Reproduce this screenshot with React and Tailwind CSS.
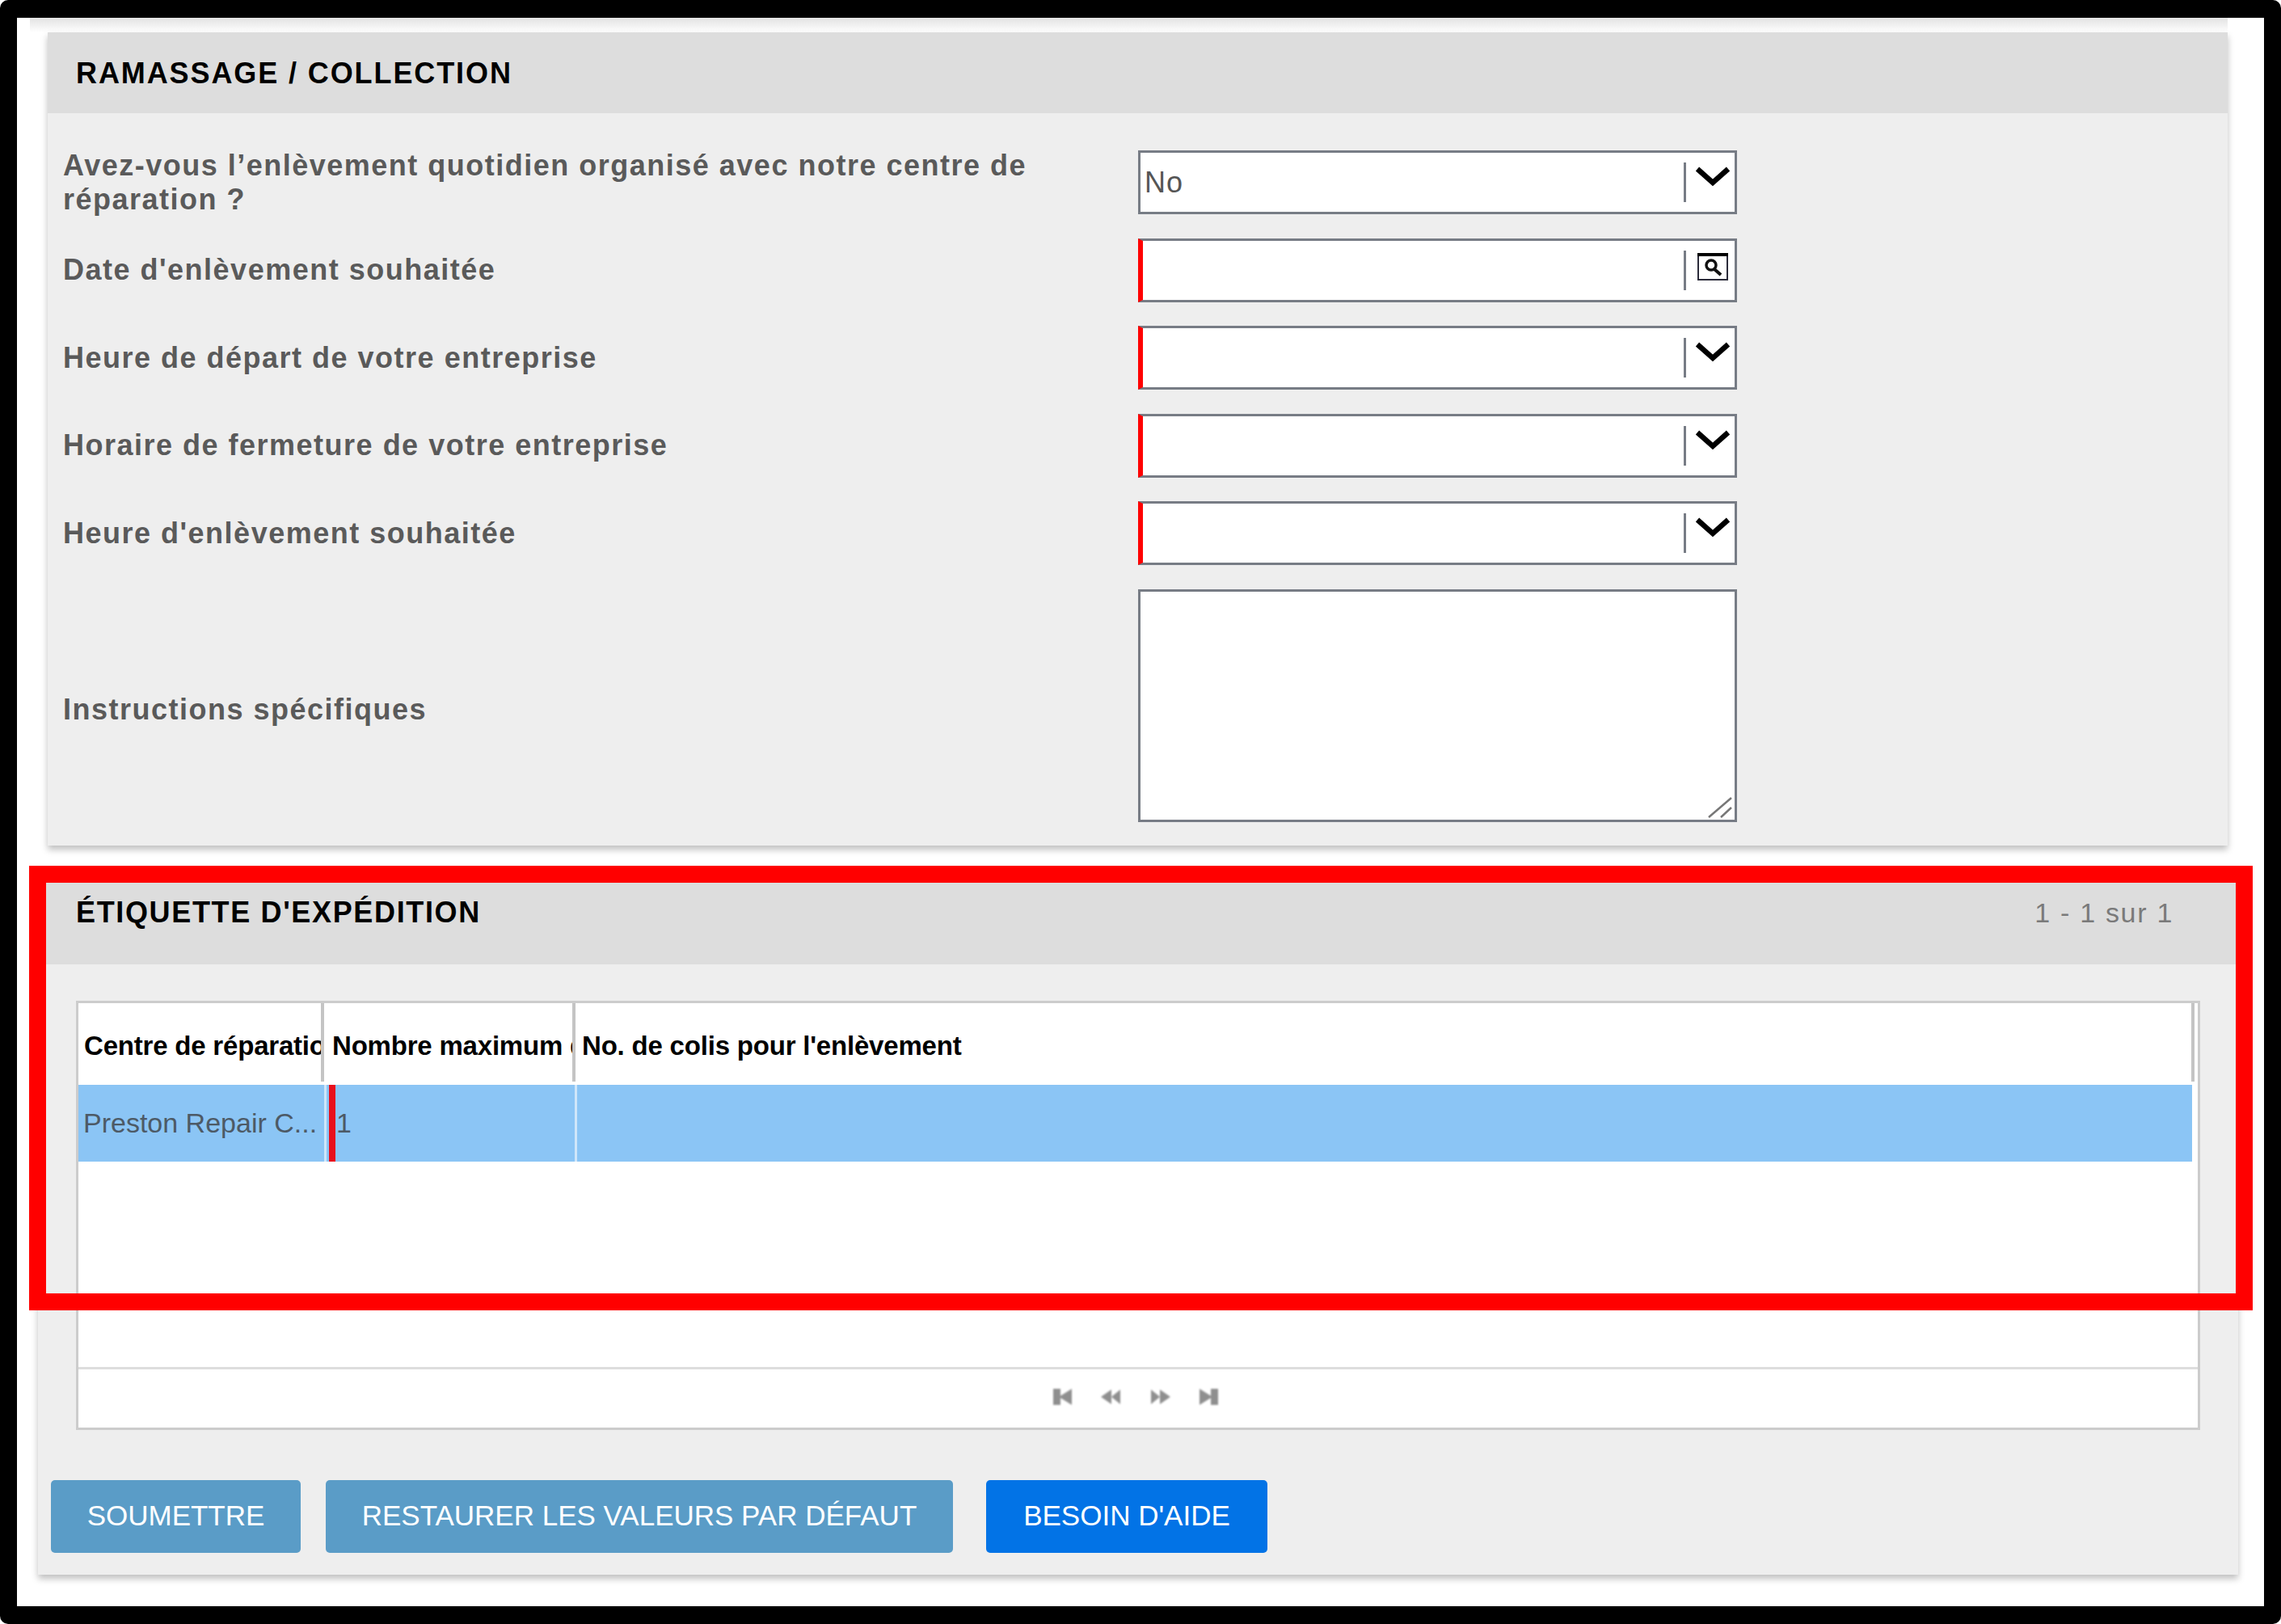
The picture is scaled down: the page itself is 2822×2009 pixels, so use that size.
const labelClass = "font-bold text-[36px] leading-[42px] tracking-[1.5px] text-[#5a5a5a]";

function Chevron() {
  return (
    <svg width="44" height="26" viewBox="0 0 44 26" className="block">
      <path d="M3 4 L22 21 L41 4" fill="none" stroke="#000" strokeWidth="6.5" />
    </svg>
  );
}

function DateIcon() {
  return (
    <svg width="38" height="34" viewBox="0 0 38 34" className="block">
      <rect x="1" y="1" width="36" height="32" fill="#fff" stroke="#2b2b3a" strokeWidth="2" />
      <rect x="0" y="0" width="38" height="4" fill="#000" />
      <circle cx="17" cy="15" r="6" fill="none" stroke="#111" strokeWidth="3.5" />
      <path d="M21 20 L29 27" stroke="#111" strokeWidth="4" />
    </svg>
  );
}

function Field({ value, required, icon }) {
  return (
    <div className={`w-[741px] h-[79px] bg-white border-[3px] border-[#777c85] flex items-center ${required ? "border-l-[6px] border-l-[#ff0000]" : ""}`}>
      <div className="flex-1 pl-[5px] text-[36px] tracking-[1px] text-[#555]">{value}</div>
      <div className="w-[3px] h-[49px] bg-[#777c85]" />
      <div className={`w-[60px] flex justify-center pl-[5px] ${icon === "date" ? "pb-[8px]" : "pb-[15px]"}`}>
        {icon === "date" ? <DateIcon /> : <Chevron />}
      </div>
    </div>
  );
}

function Row({ label, children }) {
  return (
    <div className="flex items-center">
      <div className={`${labelClass} w-[1330px] pr-[40px] my-[-6px]`}>{label}</div>
      {children}
    </div>
  );
}

function PagerIcon({ d }) {
  return (
    <svg width="26" height="20" viewBox="0 0 26 20" className="block blur-[1px]">
      <path d={d} fill="#8f8f8f" />
    </svg>
  );
}

function Shipping() {
  return (
    <div className="ml-[26px] mr-[32px] mt-[27px] bg-[#eeeeee] shadow-[0_5px_8px_rgba(0,0,0,0.25)]">
      <div className="h-[120px] bg-[#dddddd] pl-[47px] pr-[80px] pt-[35px] flex justify-between items-start">
        <div className="font-bold text-[36px] leading-[42px] tracking-[1.65px] text-black">ÉTIQUETTE D'EXPÉDITION</div>
        <div className="text-[34px] leading-[42px] tracking-[1.7px] text-[#7a7a7a]">1 - 1 sur 1</div>
      </div>
      <div className="mx-[47px] mt-[45px] h-[531px] bg-white border-[3px] border-[#cccccc] flex flex-col">
        <div className="h-[101px] flex font-bold text-[33px] tracking-[-0.2px] text-black">
          <div className="w-[304px] h-[97px] border-r-[4px] border-[#c4c4c4] pl-[7px] pt-[10px] flex items-center overflow-hidden whitespace-nowrap">Centre de réparation</div>
          <div className="w-[311px] h-[97px] border-r-[4px] border-[#c4c4c4] pl-[10px] pt-[10px] flex items-center overflow-hidden whitespace-nowrap">Nombre maximum de colis</div>
          <div className="flex-1 h-[97px] border-r-[4px] border-[#c4c4c4] pl-[8px] pt-[10px] flex items-center whitespace-nowrap">No. de colis pour l'enlèvement</div>
          <div className="w-[4px]" />
        </div>
        <div className="h-[95px] mr-[7px] flex bg-[#8bc5f5] text-[34px] text-[#4d5a66]">
          <div className="w-[307px] border-r-[3px] border-[#cfe6fa] pl-[6px] flex items-center whitespace-nowrap">Preston Repair C...</div>
          <div className="w-[310px] border-r-[3px] border-[#cfe6fa] flex items-center">
            <div className="w-[8px] h-full bg-[#e8101c] mr-[1px] ml-[3px]" />
            1
          </div>
          <div className="flex-1" />
        </div>
        <div className="flex-1" />
        <div className="h-[75px] border-t-[3px] border-[#dddddd] flex items-center justify-center gap-[34px] pr-[7px] pb-[4px]">
          <PagerIcon d="M1 0h9v20H1zM8 10 L24 0v20z" />
          <PagerIcon d="M0 10 L13 1v18zM13 10 L24 1v18z" />
          <PagerIcon d="M2 1 L13 10 L2 19zM13 1 L26 10 L13 19z" />
          <PagerIcon d="M2 0 L18 10 L2 20zM16 0h9v20h-9z" />
        </div>
      </div>
      <div className="mt-[62px] pl-[16px] pb-[27px] flex text-[35px] text-white">
        <button className="w-[309px] h-[90px] rounded-[5px] bg-[#5a9cc7]">SOUMETTRE</button>
        <button className="ml-[31px] w-[776px] h-[90px] rounded-[5px] bg-[#5a9cc7]">RESTAURER LES VALEURS PAR DÉFAUT</button>
        <button className="ml-[41px] w-[348px] h-[90px] rounded-[5px] bg-[#0273e6]">BESOIN D'AIDE</button>
      </div>
    </div>
  );
}

export default function App() {
  return (
    <div className="relative w-[2822px] h-[2009px] bg-white font-['Liberation_Sans',Arial,sans-serif]">
      <div className="w-full h-full rounded-[10px] bg-black pl-[21px] pr-[21px] pt-[22px] pb-[22px]">
        <div className="w-full h-full bg-white overflow-hidden">
          <div className="h-[18px] ml-[16px] mr-[45px] bg-gradient-to-b from-[#e2e2e2] to-white" />
          <div className="ml-[38px] mr-[45px] bg-[#eeeeee] shadow-[0_5px_8px_rgba(0,0,0,0.25)]">
            <div className="h-[100px] bg-[#dddddd] pl-[35px] pt-[2px] flex items-center">
              <div className="font-bold text-[36px] tracking-[1.9px] text-black">RAMASSAGE / COLLECTION</div>
            </div>
            <div className="pl-[19px] pt-[46px] pb-[29px] flex flex-col gap-[29.5px]">
              <Row label="Avez-vous l’enlèvement quotidien organisé avec notre centre de réparation ?">
                <Field value="No" />
              </Row>
              <Row label="Date d'enlèvement souhaitée"><Field required icon="date" /></Row>
              <Row label="Heure de départ de votre entreprise"><Field required /></Row>
              <Row label="Horaire de fermeture de votre entreprise"><Field required /></Row>
              <Row label="Heure d'enlèvement souhaitée"><Field required /></Row>
              <Row label={<div className="pt-[10px]">Instructions spécifiques</div>}>
                <div className="relative w-[741px] h-[288px] bg-white border-[3px] border-[#777c85]">
                  <svg width="32" height="26" viewBox="0 0 32 26" className="absolute right-[2px] bottom-[2px]">
                    <path d="M2 25 L30 1 M17 25 L30 13" stroke="#777" strokeWidth="2.5" fill="none" />
                  </svg>
                </div>
              </Row>
            </div>
          </div>
          <Shipping />
        </div>
      </div>
      <div className="absolute left-[36px] top-[1071px] w-[2751px] h-[550px] border-[21px] border-[#ff0000]" />
    </div>
  );
}
